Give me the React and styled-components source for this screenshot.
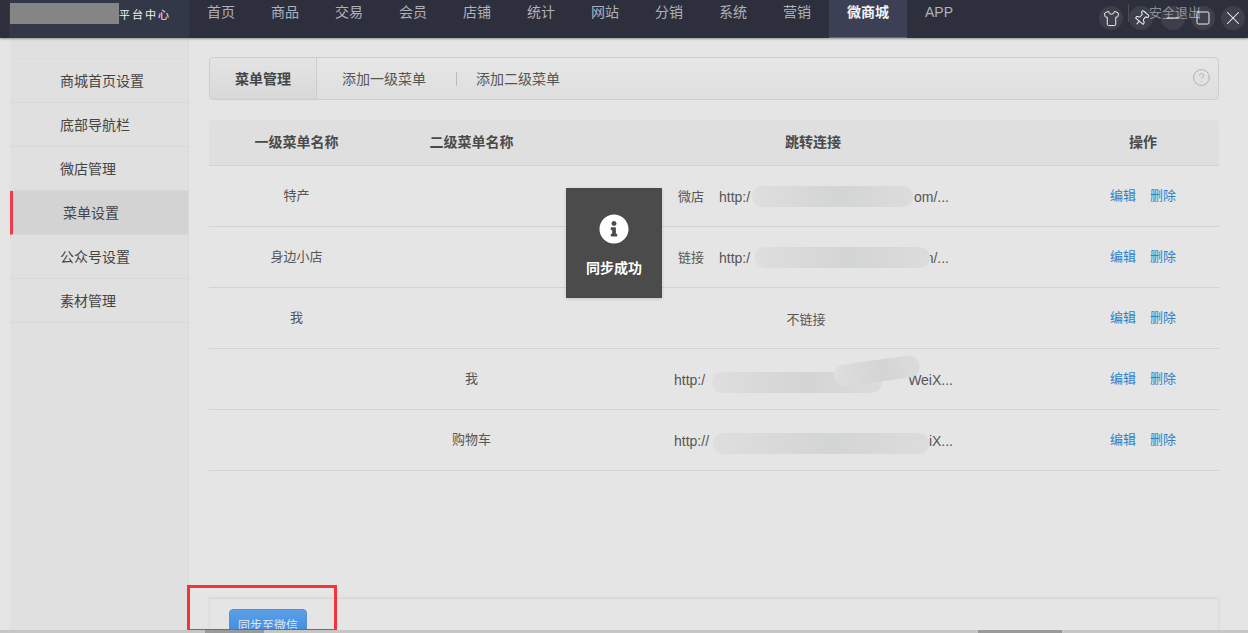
import React from 'react'
import styled, {createGlobalStyle} from 'styled-components'
import {Shirt, Pin, Minus, Square, X, CircleHelp} from 'lucide-react'
import {FaInfoCircle} from 'react-icons/fa'

const Global = createGlobalStyle`
  html, body {
    margin: 0;
    padding: 0;
    height: 633px;
    overflow: hidden;
    background: #e5e5e5;
    font-family: "Liberation Sans", "Noto Sans CJK SC", sans-serif;
    color: #444;
  }
  * { box-sizing: border-box; }
`

const Page = styled.div`
  position: relative;
  width: 1248px;
  height: 633px;
  overflow: hidden;
`

const Header = styled.header`
  position: relative;
  z-index: 1;
  display: flex;
  height: 38px;
  background: #2d303c;
  box-shadow: 0 1px 2px rgba(0, 0, 0, 0.35);
  padding-left: 9px;
`

const Brand = styled.div`
  position: relative;
  width: 180px;
  background: #333848;
  color: #f0f0f0;
  font-size: 11px;
  letter-spacing: 2px;
  line-height: 30px;
  padding-left: 110px;
  white-space: nowrap;
`

const LogoBlur = styled.div`
  position: absolute;
  left: 1px;
  top: 3px;
  width: 109px;
  height: 21px;
  background: #858585;
`

const Nav = styled.nav`
  display: flex;
`

const NavItem = styled.a`
  display: block;
  padding: 2px 18px 0;
  font-size: 14px;
  line-height: 20px;
  color: ${p => (p.$active ? '#f4f4f4' : '#aeb2bc')};
  font-weight: ${p => (p.$active ? 'bold' : 'normal')};
  background: ${p => (p.$active ? '#3b4054' : 'transparent')};
  border-bottom: ${p => (p.$active ? '1px solid #c0434b' : 'none')};
`

const Logout = styled.span`
  position: absolute;
  z-index: 2;
  top: 4px;
  left: 1128px;
  height: 18px;
  padding-left: 20px;
  border-left: 1px solid #4a4d58;
  font-size: 13px;
  line-height: 18px;
  color: #8b8e96;
  white-space: nowrap;
`

const WindowBar = styled.div`
  position: absolute;
  z-index: 2;
  top: 6px;
  right: 3px;
  display: flex;
  gap: 6px;
`

const WinButton = styled.span`
  display: flex;
  align-items: center;
  justify-content: center;
  width: 24px;
  height: 24px;
  border-radius: 50%;
  background: rgba(255, 255, 255, 0.08);
  color: #f2f2f2;
  &:nth-child(3) { margin-left: 2px; }
`

const PinIcon = styled(Pin)`
  transform: rotate(40deg);
`

const Body = styled.div`
  display: flex;
  height: 595px;
`

const Side = styled.aside`
  width: 179px;
  margin-left: 10px;
  background: #e0e0e0;
  border-right: 1px solid #dadada;
  padding-top: 20px;
  flex-shrink: 0;
`

const SideItem = styled.div`
  height: 44px;
  line-height: 45px;
  font-size: 14px;
  color: #444;
  padding-left: 50px;
  border-bottom: 1px solid #d8d8d8;
  background: ${p => (p.$active ? '#d3d3d3' : 'transparent')};
  border-left: ${p => (p.$active ? '3px solid #ef3b4b' : 'none')};
  &:first-child {
    height: 45px;
    line-height: 44px;
    border-top: 1px solid #dcdcdc;
  }
`

const Main = styled.main`
  width: 1010px;
  margin-left: 20px;
  padding-top: 19px;
  flex-shrink: 0;
`

const Tabs = styled.div`
  display: flex;
  align-items: stretch;
  height: 43px;
  border: 1px solid #cdcdcd;
  border-radius: 4px;
  background: linear-gradient(#e6e6e6, #dedede);
  font-size: 14px;
  color: #555;
  margin-bottom: 20px;
`

const ActiveTab = styled.div`
  width: 107px;
  text-align: center;
  line-height: 42px;
  font-weight: bold;
  color: #444;
  background: linear-gradient(#e4e4e4, #d8d8d8);
  border-right: 1px solid #cdcdcd;
  border-radius: 4px 0 0 4px;
`

const Tab = styled.div`
  line-height: 42px;
  padding-left: ${p => p.$pad}px;
`

const Divider = styled.span`
  width: 1px;
  height: 14px;
  background: #bbb;
  margin: 14px 0 0 30px;
`

const Help = styled.span`
  margin-left: auto;
  padding: 10px 7px 0 0;
  color: #b0b0b0;
`

const Table = styled.div`
  width: 1010px;
`

const Grid = styled.div`
  display: grid;
  grid-template-columns: 175px 175px 508px 152px;
  height: ${p => (p.$head ? '46px' : '61px')};
  background: ${p => (p.$head ? '#dfdfdf' : 'transparent')};
  border-bottom: 1px solid #d2d2d2;
  border-radius: ${p => (p.$head ? '4px 4px 0 0' : '0')};
  font-size: 13px;
  color: #555;
`

const HeadCell = styled.div`
  font-size: 14px;
  font-weight: bold;
  color: #4a4a4a;
  text-align: center;
  line-height: 44px;
`

const Cell = styled.div`
  text-align: center;
  line-height: 60px;
`

const LinkCell = styled.div`
  position: relative;
  display: flex;
  padding-left: ${p => p.$pad}px;
  gap: 15px;
  line-height: 62px;
  white-space: nowrap;
  font-size: 14px;
`

const LinkLabel = styled.span`
  font-size: 13px;
`

const Url = styled.span`
  display: flex;
  justify-content: space-between;
  width: ${p => p.$width}px;
`

const NoLink = styled.div`
  text-align: center;
  line-height: 64px;
  padding-right: 14px;
`

const Blur = styled.span`
  position: absolute;
  background: linear-gradient(90deg, #dedede, #d3d4d4 55%, #dcdcdc);
  border-radius: 10px;
`

const Actions = styled.div`
  display: flex;
  gap: 14px;
  padding-left: 43px;
  line-height: 60px;
  color: #2f80c9;
`

const Footer = styled.div`
  height: 60px;
  margin-top: 127px;
  padding: 10px 0 0 19px;
  background: #e5e5e5;
  border-top: 1px solid #d6d6d6;
  border-left: 1px solid #dedede;
  border-right: 1px solid #dedede;
  box-shadow: 0 -1px 3px rgba(0, 0, 0, 0.05);
`

const SyncButton = styled.button`
  width: 78px;
  height: 30px;
  padding: 0;
  border: 1px solid #5b8fcb;
  border-radius: 4px;
  background: linear-gradient(#5a9fe6, #3f87df);
  color: #dfeaf6;
  font-family: inherit;
  font-size: 12px;
`

const Toast = styled.div`
  position: absolute;
  left: 566px;
  top: 188px;
  width: 96px;
  height: 110px;
  background: #4b4b4b;
  box-shadow: 0 1px 3px rgba(0, 0, 0, 0.15);
  color: #fff;
  display: flex;
  flex-direction: column;
  align-items: center;
  padding-top: 26px;
  font-size: 14px;
  font-weight: bold;
  line-height: 18px;
  gap: 15px;
`

const RedFrame = styled.div`
  position: absolute;
  left: 187px;
  top: 585px;
  width: 150px;
  height: 47px;
  border: 3px solid #f43535;
`

const ScrollEdge = styled.div`
  position: absolute;
  left: 0;
  right: 0;
  bottom: 0;
  height: 3px;
  background: #c6c6c6;
`

const ScrollThumb = styled.span`
  position: absolute;
  top: 0;
  left: ${p => p.$left}px;
  width: ${p => p.$width}px;
  height: 3px;
  background: #9a9a9a;
`

const navItems = ['首页', '商品', '交易', '会员', '店铺', '统计', '网站', '分销', '系统', '营销', '微商城', 'APP']
const sideItems = ['商城首页设置', '底部导航栏', '微店管理', '菜单设置', '公众号设置', '素材管理']

const rows = [
  {first: '特产', label: '微店', pad: 119, width: 230, head: 'http:/', tail: 'om/...', blurs: [{left: 193, top: 20, width: 161, height: 21}]},
  {first: '身边小店', label: '链接', pad: 119, width: 230, head: 'http:/', tail: 'n/...', blurs: [{left: 196, top: 20, width: 175, height: 21}]},
  {first: '我', none: true},
  {second: '我', pad: 115, width: 279, head: 'http:/', tail: 'WeiX...', blurs: [{left: 153, top: 23, width: 170, height: 21}, {left: 275, top: 11, width: 86, height: 22, rotate: -8}]},
  {second: '购物车', pad: 115, width: 279, head: 'http://', tail: 'iX...', blurs: [{left: 154, top: 23, width: 216, height: 21}]},
]

export default function App() {
  return (
    <Page>
      <Global />
      <Header>
        <Brand>
          <LogoBlur />
          平台中心
        </Brand>
        <Nav>
          {navItems.map(item => (
            <NavItem key={item} $active={item === '微商城'}>{item}</NavItem>
          ))}
        </Nav>
      </Header>
      <Logout>安全退出</Logout>
      <WindowBar>
        <WinButton><Shirt size={17} strokeWidth={1.4} /></WinButton>
        <WinButton><PinIcon size={17} strokeWidth={1.4} /></WinButton>
        <WinButton><Minus size={20} strokeWidth={1.2} /></WinButton>
        <WinButton><Square size={16} strokeWidth={1.5} /></WinButton>
        <WinButton><X size={22} strokeWidth={1.1} /></WinButton>
      </WindowBar>
      <Body>
        <Side>
          {sideItems.map(item => (
            <SideItem key={item} $active={item === '菜单设置'}>{item}</SideItem>
          ))}
        </Side>
        <Main>
          <Tabs>
            <ActiveTab>菜单管理</ActiveTab>
            <Tab $pad={25}>添加一级菜单</Tab>
            <Divider />
            <Tab $pad={19}>添加二级菜单</Tab>
            <Help><CircleHelp size={19} strokeWidth={1.2} /></Help>
          </Tabs>
          <Table>
            <Grid $head>
              <HeadCell>一级菜单名称</HeadCell>
              <HeadCell>二级菜单名称</HeadCell>
              <HeadCell>跳转连接</HeadCell>
              <HeadCell>操作</HeadCell>
            </Grid>
            {rows.map((row, i) => (
              <Grid key={i}>
                <Cell>{row.first}</Cell>
                <Cell>{row.second}</Cell>
                {row.none ? (
                  <NoLink>不链接</NoLink>
                ) : (
                  <LinkCell $pad={row.pad}>
                    {row.label && <LinkLabel>{row.label}</LinkLabel>}
                    <Url $width={row.width}>
                      <span>{row.head}</span>
                      <span>{row.tail}</span>
                    </Url>
                    {row.blurs.map((b, j) => (
                      <Blur
                        key={j}
                        style={{left: b.left, top: b.top, width: b.width, height: b.height, transform: b.rotate ? `rotate(${b.rotate}deg)` : undefined}}
                      />
                    ))}
                  </LinkCell>
                )}
                <Actions>
                  <span>编辑</span>
                  <span>删除</span>
                </Actions>
              </Grid>
            ))}
          </Table>
          <Footer>
            <SyncButton>同步至微信</SyncButton>
          </Footer>
        </Main>
      </Body>
      <Toast>
        <FaInfoCircle size={30} />
        同步成功
      </Toast>
      <RedFrame />
      <ScrollEdge>
        <ScrollThumb $left={205} $width={59} />
        <ScrollThumb $left={978} $width={84} />
      </ScrollEdge>
    </Page>
  )
}
